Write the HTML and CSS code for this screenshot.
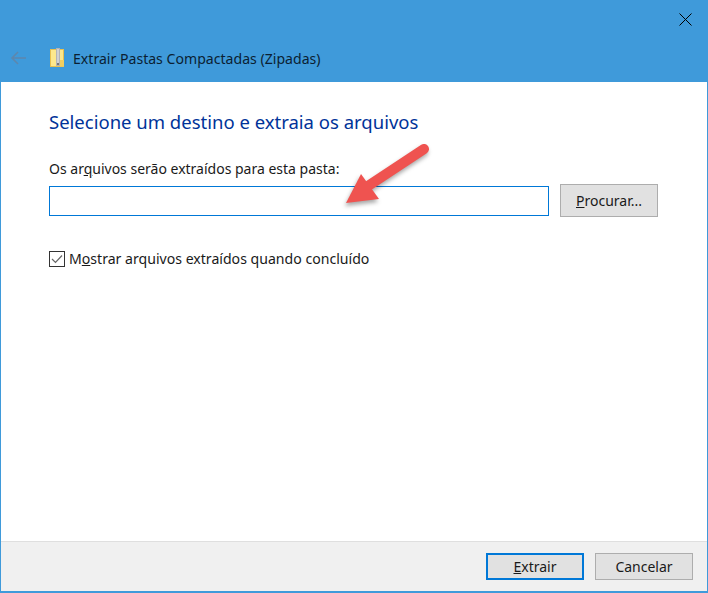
FILE: index.html
```html
<!DOCTYPE html>
<html lang="pt-BR">
<head>
    <meta charset="UTF-8">
    <meta name="viewport" content="width=device-width, initial-scale=1.0">
    <title>Extrair Pastas Compactadas (Zipadas)</title>
    <link rel="stylesheet" href="styles.css">
</head>
<body>
    <div class="window">
        <div class="title-bar">
            <div class="close-row">
                <svg class="close-icon" width="13" height="13" viewBox="0 0 13 13">
                    <path d="M0.5 0.5L12.5 12.5M12.5 0.5L0.5 12.5" stroke="#000" stroke-width="1" fill="none"/>
                </svg>
            </div>
            <div class="nav-row">
                <svg class="back-icon" width="16" height="14" viewBox="0 0 16 14">
                    <path d="M16 7H2M8 1L2 7L8 13" stroke="#5d87ad" stroke-width="1.6" fill="none"/>
                </svg>
                <svg class="zip-icon" width="15" height="19" viewBox="0 0 15 19">
                    <rect x="0.5" y="1.5" width="13" height="17" fill="#fde88c" stroke="#e8c050"/>
                    <rect x="10" y="12" width="4" height="6.5" fill="#f3cf5f"/>
                    <rect x="6" y="0" width="4" height="18" fill="#b4b4b4"/>
                    <path d="M7 2h2M7 4h2M7 6h2M7 8h2M7 10h2M7 12h2M7 14h2" stroke="#eee" stroke-width="1"/>
                    <rect x="7" y="15" width="2" height="2" fill="#777"/>
                </svg>
                <span class="window-title">Extrair Pastas Compactadas (Zipadas)</span>
            </div>
        </div>

        <div class="content">
            <h1 class="main-heading">Selecione um destino e extraia os arquivos</h1>
            <label class="path-label" for="dest">Os ar<u>q</u>uivos serão extraídos para esta pasta:</label>
            <div class="path-row">
                <input class="path-input" id="dest" type="text">
                <button class="btn browse-btn" type="button"><u>P</u>rocurar...</button>
            </div>
            <div class="check-row">
                <svg class="check-box" width="16" height="16" viewBox="0 0 16 16">
                    <rect x="0.5" y="0.5" width="15" height="15" fill="#fff" stroke="#333"/>
                    <path d="M3 8L6.5 11.5L13 4.5" stroke="#666" stroke-width="1.2" fill="none"/>
                </svg>
                <span class="check-label">M<u>o</u>strar arquivos extraídos quando concluído</span>
            </div>
        </div>

        <div class="footer">
            <button class="btn default-btn" type="button"><u>E</u>xtrair</button>
            <button class="btn" type="button">Cancelar</button>
        </div>

        <!-- annotation arrow over the dialog -->
        <svg class="arrow" width="708" height="593" viewBox="0 0 708 593">
            <path d="M424 149L368 186" stroke="#ef5350" stroke-width="10" stroke-linecap="round" fill="none"/>
            <path d="M346 203L361 174L379 199Z" fill="#ef5350"/>
        </svg>
    </div>
</body>
</html>
```

FILE: styles.css
```css
* {
    margin: 0;
    padding: 0;
    box-sizing: border-box;
    font-family: 'Noto Sans', 'Open Sans', sans-serif;
}

html, body {
    width: 708px;
    height: 593px;
    overflow: hidden;
    background: #fff;
}

.window {
    position: relative;
    width: 708px;
    height: 593px;
    display: flex;
    flex-direction: column;
    border-left: 1px solid #3f9ada;
    border-right: 1px solid #3f9ada;
    border-bottom: 2px solid #3f9ada;
}

.title-bar {
    height: 82px;
    margin: 0 -1px;
    background: #3f9ada;
    display: flex;
    flex-direction: column;
}

.close-row {
    display: flex;
    justify-content: flex-end;
    padding: 13px 16px 0 0;
    height: 36px;
}

.nav-row {
    display: flex;
    align-items: center;
    height: 34px;
    padding: 10px 0 0 10px;
}

.zip-icon {
    margin-left: 24px;
    margin-top: -2px;
}

.window-title {
    margin-left: 8px;
    font-size: 14.1px;
    color: #0b1f33;
}

.content {
    flex: 1;
    padding: 28px 49px 0 48px;
}

.main-heading {
    font-size: 18.5px;
    font-weight: 400;
    line-height: 24px;
    color: #003399;
}

.path-label {
    display: block;
    margin-top: 25px;
    font-size: 14px;
    line-height: 20px;
    color: #1a1a1a;
}

.path-row {
    display: flex;
    align-items: center;
    gap: 11px;
    margin-top: 5px;
}

.path-input {
    width: 500px;
    height: 30px;
    border: 1px solid #0078d7;
    outline: none;
    background: #fff;
}

.btn {
    width: 98px;
    height: 27px;
    background: #e1e1e1;
    border: 1px solid #adadad;
    font-size: 14px;
    color: #1a1a1a;
}

.browse-btn {
    height: 33px;
}

.default-btn {
    border: 2px solid #0078d7;
}

.check-row {
    display: flex;
    align-items: center;
    gap: 4px;
    margin-top: 32px;
}

.check-label {
    font-size: 14.1px;
    line-height: 20px;
    color: #1a1a1a;
}

.footer {
    height: 50px;
    background: #f0f0f0;
    border-top: 1px solid #dfdfdf;
    display: flex;
    justify-content: flex-end;
    gap: 11px;
    padding: 11px 14px 0 0;
}

.arrow {
    position: absolute;
    top: 0;
    left: -1px;
    pointer-events: none;
    filter: drop-shadow(-1px 3px 2px rgba(0, 0, 0, 0.35));
}
```
